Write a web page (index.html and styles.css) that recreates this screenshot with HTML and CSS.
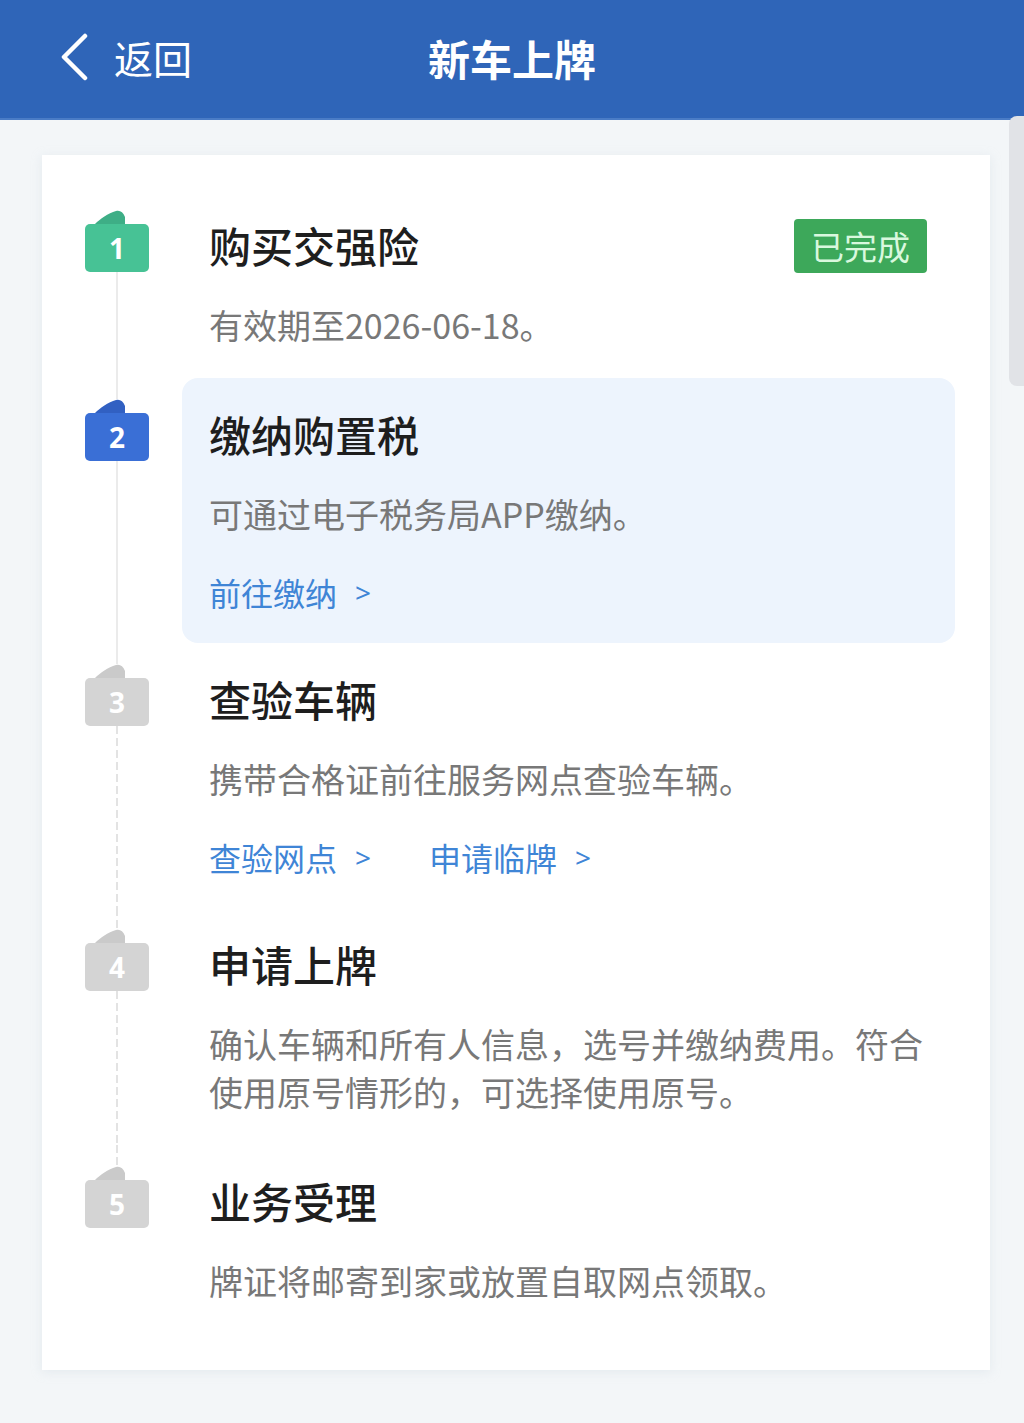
FILE: index.html
```html
<!DOCTYPE html>
<html lang="zh-CN">
<head>
    <meta charset="UTF-8">
    <meta name="viewport" content="width=device-width, initial-scale=1.0">
    <title>新车上牌</title>
    <link rel="stylesheet" href="styles.css">
</head>
<body>
    <header class="topbar">
        <a class="back" href="#">
            <svg class="back-icon" width="30" height="48" viewBox="0 0 30 48">
                <path d="M25 3 L4 24 L25 45" fill="none" stroke="#fff" stroke-width="4.5" stroke-linecap="round" stroke-linejoin="round"/>
            </svg>
            <span>返回</span>
        </a>
        <h1 class="title">新车上牌</h1>
    </header>

    <div class="scrollbar"></div>

    <main class="page">
        <div class="card">

            <div class="step done">
                <div class="marker">
                    <span class="seg seg-top hidden"></span>
                    <svg class="tab" width="64" height="14" viewBox="0 0 64 14"><path d="M10 14 C15 9 23 3 31 1 C35 0 38 2 40 7 L40 14 Z"/></svg>
                    <span class="badge">1</span>
                    <span class="seg seg-grow"></span>
                </div>
                <div class="body">
                    <div class="head">
                        <h2>购买交强险</h2>
                        <span class="status">已完成</span>
                    </div>
                    <p class="desc">有效期至2026-06-18。</p>
                </div>
            </div>

            <div class="step current">
                <div class="marker">
                    <span class="seg seg-top"></span>
                    <svg class="tab" width="64" height="14" viewBox="0 0 64 14"><path d="M10 14 C15 9 23 3 31 1 C35 0 38 2 40 7 L40 14 Z"/></svg>
                    <span class="badge">2</span>
                    <span class="seg seg-grow"></span>
                </div>
                <div class="body">
                    <div class="head"><h2>缴纳购置税</h2></div>
                    <p class="desc">可通过电子税务局APP缴纳。</p>
                    <div class="links">
                        <a href="#">前往缴纳<span class="arrow">&gt;</span></a>
                    </div>
                </div>
            </div>

            <div class="step todo">
                <div class="marker">
                    <span class="seg seg-top"></span>
                    <svg class="tab" width="64" height="14" viewBox="0 0 64 14"><path d="M10 14 C15 9 23 3 31 1 C35 0 38 2 40 7 L40 14 Z"/></svg>
                    <span class="badge">3</span>
                    <span class="seg seg-grow dashed"></span>
                </div>
                <div class="body">
                    <div class="head"><h2>查验车辆</h2></div>
                    <p class="desc">携带合格证前往服务网点查验车辆。</p>
                    <div class="links">
                        <a href="#">查验网点<span class="arrow">&gt;</span></a>
                        <a href="#">申请临牌<span class="arrow">&gt;</span></a>
                    </div>
                </div>
            </div>

            <div class="step todo">
                <div class="marker">
                    <span class="seg seg-top dashed"></span>
                    <svg class="tab" width="64" height="14" viewBox="0 0 64 14"><path d="M10 14 C15 9 23 3 31 1 C35 0 38 2 40 7 L40 14 Z"/></svg>
                    <span class="badge">4</span>
                    <span class="seg seg-grow dashed"></span>
                </div>
                <div class="body">
                    <div class="head"><h2>申请上牌</h2></div>
                    <p class="desc">确认车辆和所有人信息，选号并缴纳费用。符合使用原号情形的，可选择使用原号。</p>
                </div>
            </div>

            <div class="step todo">
                <div class="marker">
                    <span class="seg seg-top dashed"></span>
                    <svg class="tab" width="64" height="14" viewBox="0 0 64 14"><path d="M10 14 C15 9 23 3 31 1 C35 0 38 2 40 7 L40 14 Z"/></svg>
                    <span class="badge">5</span>
                </div>
                <div class="body">
                    <div class="head"><h2>业务受理</h2></div>
                    <p class="desc">牌证将邮寄到家或放置自取网点领取。</p>
                </div>
            </div>

        </div>
    </main>
</body>
</html>
```

FILE: styles.css
```css
* {
    box-sizing: border-box;
}
body {
    margin: 0;
    min-height: 1423px;
    font-family: "Noto Sans CJK SC", "Noto Sans", sans-serif;
    background-color: #f3f6f8;
    position: relative;
}
.topbar {
    height: 120px;
    background-color: #2f65b8;
    border-bottom: 2px solid #4a7cc6;
    display: flex;
    align-items: center;
    position: relative;
    padding-left: 60px;
}
.back {
    display: flex;
    align-items: center;
    gap: 24px;
    color: #fff;
    text-decoration: none;
    font-size: 39px;
    line-height: 1;
    margin-top: -4px;
}
.title {
    position: absolute;
    left: 0;
    right: 0;
    margin: 0;
    text-align: center;
    color: #fff;
    font-size: 42px;
    font-weight: bold;
    margin-top: -4px;
    pointer-events: none;
}
.scrollbar {
    position: absolute;
    top: 116px;
    right: 0;
    width: 15px;
    height: 270px;
    background-color: #e1e3e7;
    border-radius: 8px 0 0 8px;
}
.page {
    padding: 35px 34px 0 42px;
}
.card {
    background-color: #fff;
    padding: 34px 35px 36px 43px;
    box-shadow: 0 2px 10px rgba(200, 212, 222, 0.35);
}

/* steps */
.step {
    display: flex;
}
.marker {
    width: 64px;
    margin-right: 33px;
    display: flex;
    flex-direction: column;
    align-items: center;
    flex-shrink: 0;
}
.seg {
    width: 2px;
    background-color: #ebebeb;
}
.seg-top {
    height: 21px;
    flex-shrink: 0;
}
.seg-grow {
    flex: 1;
}
.seg.dashed {
    background: repeating-linear-gradient(to bottom, #e3e3e3 0 8px, transparent 8px 12px);
}
.hidden {
    visibility: hidden;
}
.tab {
    display: block;
    flex-shrink: 0;
}
.badge {
    width: 64px;
    height: 48px;
    flex-shrink: 0;
    border-radius: 5px;
    display: flex;
    align-items: center;
    justify-content: center;
    color: #fff;
    font-family: "Noto Sans", sans-serif;
    font-size: 28px;
    font-weight: bold;
}
.done .badge {
    background-color: #47c295;
}
.done .tab path {
    fill: #3eae86;
}
.current .badge {
    background-color: #3a6fd6;
}
.current .tab path {
    fill: #3160c2;
}
.todo .badge {
    background-color: #d4d4d4;
}
.todo .tab path {
    fill: #cacaca;
}

.body {
    flex: 1;
    padding: 28px 28px 29px 27px;
    border-radius: 16px;
}
.current .body {
    background-color: #edf4fd;
}
.head {
    display: flex;
    align-items: center;
    justify-content: space-between;
    height: 56px;
}
.head h2 {
    margin: 0;
    font-size: 42px;
    font-weight: 500;
    color: #1e1e1e;
    line-height: 56px;
}
.status {
    background-color: #3da85a;
    color: #d9f8de;
    font-size: 33px;
    line-height: 54px;
    height: 54px;
    padding: 0 17px;
    margin-top: 2px;
    border-radius: 4px;
}
.desc {
    margin: 28px 0 0;
    font-size: 34px;
    line-height: 48px;
    color: #787878;
}
.links {
    margin-top: 32px;
    display: flex;
    gap: 58px;
    height: 44px;
}
.links a {
    display: flex;
    align-items: center;
    height: 44px;
    line-height: 44px;
    color: #3f85d6;
    text-decoration: none;
    font-size: 32px;
}
.arrow {
    margin-left: 18px;
    font-family: "Noto Sans", sans-serif;
    font-size: 28px;
    line-height: 44px;
}
```
